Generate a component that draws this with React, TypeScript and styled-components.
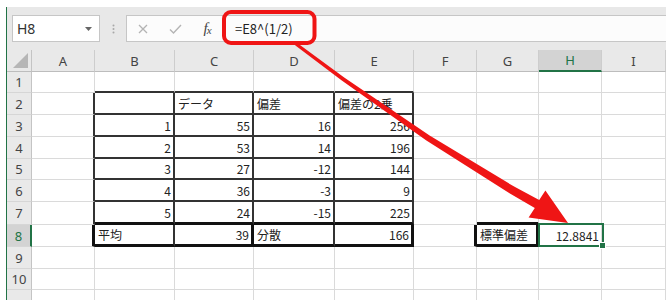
import styled, { createGlobalStyle } from 'styled-components'

const GlobalStyle = createGlobalStyle`
  html, body {
    margin: 0;
    padding: 0;
    background: #fff;
  }
  body {
    width: 666px;
    height: 300px;
    overflow: hidden;
  }
`

const EXCEL_GREEN = '#217346'
const ANNOTATION_RED = '#ef1515'

const Page = styled.div`
  position: relative;
  width: 666px;
  height: 300px;
  overflow: hidden;
  background: #fff;
`

const Window = styled.div`
  margin: 7px 0 0 6px;
  height: 293px;
  border-left: 1px solid ${EXCEL_GREEN};
  background: #fff;
`

const FormulaBar = styled.div`
  display: flex;
  align-items: flex-start;
  height: 43px;
  padding: 8px 0 0 5px;
  box-sizing: border-box;
  background: #e8e8e8;
`

const NameBox = styled.div`
  display: flex;
  align-items: center;
  justify-content: space-between;
  width: 88px;
  height: 27px;
  padding: 0 7px 0 4px;
  box-sizing: border-box;
  background: #fff;
  border: 1px solid #c6c6c6;
  font: 14px 'Noto Sans', sans-serif;
  color: #333;
`

const Grip = styled.div`
  display: flex;
  align-items: center;
  justify-content: center;
  width: 26px;
  height: 27px;
`

const FormulaBox = styled.div`
  display: flex;
  align-items: center;
  flex: 1;
  height: 27px;
  box-sizing: border-box;
  background: #fcfcfc;
  border: 1px solid #c6c6c6;
  border-right: none;
`

const ToolSlot = styled.div<{ $w: number }>`
  display: flex;
  align-items: center;
  justify-content: center;
  width: ${(p) => p.$w}px;
  height: 100%;
  color: #b4b4b4;
`

const Fx = styled.span`
  font: italic 15px 'Liberation Serif', serif;
  color: #444;
  letter-spacing: -1px;

  sub {
    font-size: 11px;
    vertical-align: -1px;
  }
`

const FormulaText = styled.div`
  padding-left: 13px;
  font: 13px 'Noto Sans CJK JP', sans-serif;
  color: #222;
`

const Sheet = styled.div`
  display: grid;
  grid-template-columns: 25px 63px 80px 79px 81px 79px 63px 62px 63px 64px;
  grid-template-rows: 22px 21px 22px 22px 22px 21px 22px 23px 22px 22px 21px 22px;
`

const Corner = styled.div`
  display: flex;
  align-items: flex-end;
  justify-content: flex-end;
  padding: 0 2px 2px 0;
  box-sizing: border-box;
  background: #e9e9e9;
  border-right: 1px solid #c4c4c4;
  border-bottom: 1px solid #bdbdbd;
`

const ColHead = styled.div<{ $active?: boolean }>`
  display: flex;
  align-items: center;
  justify-content: center;
  box-sizing: border-box;
  background: ${(p) => (p.$active ? '#d3d3d3' : '#e9e9e9')};
  border-right: 1px solid #cdcdcd;
  border-bottom: ${(p) => (p.$active ? `2px solid ${EXCEL_GREEN}` : '1px solid #bdbdbd')};
  font: 13px 'Noto Sans', sans-serif;
  color: ${(p) => (p.$active ? EXCEL_GREEN : '#444')};
`

const RowHead = styled.div<{ $active?: boolean }>`
  display: flex;
  align-items: center;
  justify-content: center;
  box-sizing: border-box;
  background: ${(p) => (p.$active ? '#d3d3d3' : '#e9e9e9')};
  border-right: ${(p) => (p.$active ? `2px solid ${EXCEL_GREEN}` : '1px solid #c4c4c4')};
  border-bottom: 1px solid #d6d6d6;
  font: 13px 'Noto Sans', sans-serif;
  color: ${(p) => (p.$active ? EXCEL_GREEN : '#444')};
`

type Edge = 'grid' | 'line' | 'bold'

function edge(e: Edge) {
  if (e === 'line') return '2px solid #333'
  if (e === 'bold') return '3px solid #111'
  return '1px solid #dadada'
}

const Cell = styled.div<{ $num?: boolean; $right: Edge; $bottom: Edge }>`
  position: relative;
  display: flex;
  align-items: center;
  justify-content: ${(p) => (p.$num ? 'flex-end' : 'flex-start')};
  padding: 0 2px 0 3px;
  box-sizing: border-box;
  border-right: ${(p) => edge(p.$right)};
  border-bottom: ${(p) => edge(p.$bottom)};
  font: 12px 'Noto Sans CJK JP', sans-serif;
  color: #222;
  white-space: nowrap;
`

const Selection = styled.div`
  position: absolute;
  top: -2px;
  left: -1px;
  right: -3px;
  bottom: -1px;
  border: 2px solid ${EXCEL_GREEN};
  z-index: 2;
  pointer-events: none;

  &::after {
    content: '';
    position: absolute;
    right: -4px;
    bottom: -4px;
    width: 5px;
    height: 5px;
    background: ${EXCEL_GREEN};
    border: 1px solid #fff;
  }
`

const Annotations = styled.svg`
  position: absolute;
  top: 0;
  left: 0;
  pointer-events: none;
`

const COLUMNS = ['A', 'B', 'C', 'D', 'E', 'F', 'G', 'H', 'I']
const ACTIVE_COL = 7
const ACTIVE_ROW = 8
// row 11 is only a sliver at the bottom of the window, its label is below the fold
const ROW_COUNT = 11
const LABELLED_ROWS = 10

type Value = string | number
const DATA: Record<number, Value[]> = {
  2: ['', '', 'データ', '偏差', '偏差の2乗'],
  3: ['', 1, 55, 16, 256],
  4: ['', 2, 53, 14, 196],
  5: ['', 3, 27, -12, 144],
  6: ['', 4, 36, -3, 9],
  7: ['', 5, 24, -15, 225],
  8: ['', '平均', 39, '分散', 166, '', '標準偏差', '12.8841'],
}
const NUMERIC_TEXT = new Set(['12.8841'])

function rightEdge(row: number, col: number): Edge {
  if (row === 8) {
    if (col === 0 || col === 2 || col === 4 || col === 5 || col === 6) return 'bold'
    if (col === 1 || col === 3) return 'line'
    return 'grid'
  }
  if (row >= 2 && row <= 7 && col >= 0 && col <= 4) return 'line'
  return 'grid'
}

function bottomEdge(row: number, col: number): Edge {
  const inTable = col >= 1 && col <= 4
  if ((row === 7 || row === 8) && (inTable || col === 6)) return 'bold'
  if (row >= 1 && row <= 6 && inTable) return 'line'
  return 'grid'
}

// red arrow, tapering from the formula box to the active cell
const SPINE: [number, number, number][] = [
  [296, 44, 3],
  [343, 79, 4],
  [428, 138, 6],
  [512, 190, 8],
  [537, 204, 9],
]
const TIP: [number, number] = [568, 223]

function arrowPoints() {
  const lower: [number, number][] = []
  const upper: [number, number][] = []
  SPINE.forEach(([x, y, w], i) => {
    const [ax, ay] = SPINE[Math.max(0, i - 1)]
    const [bx, by] = SPINE[Math.min(SPINE.length - 1, i + 1)]
    const len = Math.hypot(bx - ax, by - ay)
    const nx = -(by - ay) / len
    const ny = (bx - ax) / len
    lower.push([x + (nx * w) / 2, y + (ny * w) / 2])
    upper.push([x - (nx * w) / 2, y - (ny * w) / 2])
  })
  const [bx, by] = SPINE[SPINE.length - 1]
  const len = Math.hypot(TIP[0] - bx, TIP[1] - by)
  const nx = -(TIP[1] - by) / len
  const ny = (TIP[0] - bx) / len
  const half = 16
  const pts = [
    ...lower,
    [bx + nx * half, by + ny * half],
    TIP,
    [bx - nx * half, by - ny * half],
    ...upper.reverse(),
  ]
  return pts.map(([x, y]) => `${x.toFixed(1)},${y.toFixed(1)}`).join(' ')
}

function SheetGrid() {
  const rows = Array.from({ length: ROW_COUNT }, (_, i) => i + 1)
  return (
    <Sheet>
      <Corner>
        <svg width="16" height="16" viewBox="0 0 16 16">
          <polygon points="15,0 15,15 0,15" fill="#b6b6b6" />
        </svg>
      </Corner>
      {COLUMNS.map((c, i) => (
        <ColHead key={c} $active={i === ACTIVE_COL}>
          {c}
        </ColHead>
      ))}
      {rows.map((row) => (
        <RowGroup key={row} row={row} />
      ))}
    </Sheet>
  )
}

function RowGroup({ row }: { row: number }) {
  const values = DATA[row] ?? []
  return (
    <>
      <RowHead $active={row === ACTIVE_ROW}>{row <= LABELLED_ROWS ? row : null}</RowHead>
      {COLUMNS.map((c, col) => {
        const v = values[col] ?? ''
        const isNum = typeof v === 'number' || NUMERIC_TEXT.has(String(v))
        const active = row === ACTIVE_ROW && col === ACTIVE_COL
        return (
          <Cell
            key={c}
            $num={isNum}
            $right={rightEdge(row, col)}
            $bottom={bottomEdge(row, col)}
            style={active ? { zIndex: 2 } : undefined}
          >
            {v}
            {active && <Selection />}
          </Cell>
        )
      })}
    </>
  )
}

export default function App() {
  return (
    <Page>
      <GlobalStyle />
      <Window>
        <FormulaBar>
          <NameBox>
            <span>H8</span>
            <svg width="7" height="4" viewBox="0 0 7 4">
              <polygon points="0,0 7,0 3.5,4" fill="#666" />
            </svg>
          </NameBox>
          <Grip>
            <svg width="3" height="10" viewBox="0 0 3 10">
              <circle cx="1.5" cy="1.5" r="1" fill="#a8a8a8" />
              <circle cx="1.5" cy="5" r="1" fill="#a8a8a8" />
              <circle cx="1.5" cy="8.5" r="1" fill="#a8a8a8" />
            </svg>
          </Grip>
          <FormulaBox>
            <ToolSlot $w={32}>
              <svg width="10" height="10" viewBox="0 0 10 10">
                <path d="M1 1 L9 9 M9 1 L1 9" stroke="currentColor" strokeWidth="1.3" fill="none" />
              </svg>
            </ToolSlot>
            <ToolSlot $w={33}>
              <svg width="13" height="10" viewBox="0 0 13 10">
                <path d="M1 5.5 L4.5 9 L12 1" stroke="currentColor" strokeWidth="1.4" fill="none" />
              </svg>
            </ToolSlot>
            <ToolSlot $w={30}>
              <Fx>
                f<sub>x</sub>
              </Fx>
            </ToolSlot>
            <FormulaText>=E8^(1/2)</FormulaText>
          </FormulaBox>
        </FormulaBar>
        <SheetGrid />
      </Window>
      <Annotations width="666" height="300" viewBox="0 0 666 300">
        <rect x="224" y="12" width="90.5" height="31" rx="7" fill="none" stroke={ANNOTATION_RED} strokeWidth="4" />
        <polygon points={arrowPoints()} fill={ANNOTATION_RED} />
      </Annotations>
    </Page>
  )
}
